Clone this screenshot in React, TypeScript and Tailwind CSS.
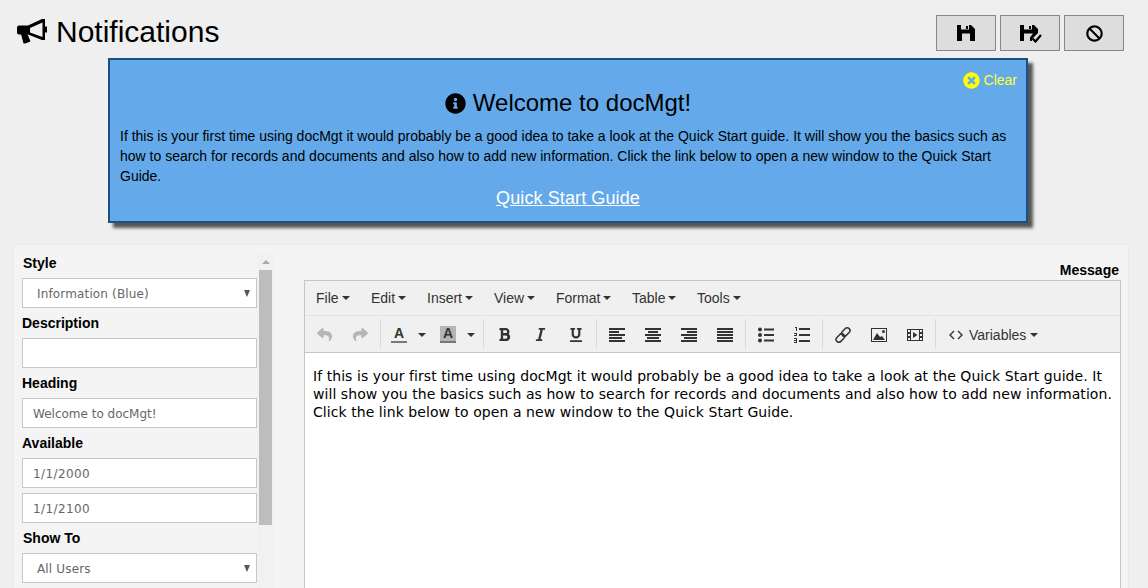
import React from "react";
import { FaInfoCircle, FaTimesCircle, FaBan, FaReply, FaShare, FaBold, FaItalic, FaUnderline } from "react-icons/fa";

const sans = "font-['Liberation_Sans',Arial,sans-serif]";
const verd = "font-['DejaVu_Sans',Verdana,sans-serif]";

const Horn = () => (
  <svg width="30" height="26" viewBox="0 0 30 26" className="mr-[9px] mt-[3px] shrink-0">
    <path
      fillRule="evenodd"
      d="M2 7.5H11L25 1H28V22H25L11 16.5H2Q0 16.5 0 14.5V9.5Q0 7.5 2 7.5ZM13 10V14.5L25.5 19V4.5Z"
      fill="#000"
    />
    <rect x="28" y="8.5" width="2" height="6" fill="#000" />
    <path d="M4 16H10.5L13.5 23.5L8 25.5H6.5Z" fill="#000" />
  </svg>
);

const Disk = ({ check = false }: { check?: boolean }) => (
  <svg width="24" height="20" viewBox="0 0 24 20">
    <path
      fillRule="evenodd"
      d={check
        ? "M2 2H16L20 6V10L14 16V18H2ZM6 2V6.5H14V2ZM11 3H13V6H11ZM6 10.5V18H12V14.5L15 10.5Z"
        : "M3 2H17L21 6V18H3ZM7 2V6.5H15V2ZM12 3H14V6H12ZM8 10.5V18H16V10.5Z"}
      fill="#000"
    />
    {check && <path d="M14.5 15.5L17.5 18.5L23 12" fill="none" stroke="#000" strokeWidth="2.2" />}
  </svg>
);

const TopButton = ({ children }: { children: React.ReactNode }) => (
  <button className="w-[60px] h-9 border border-[#888] bg-[#ddd] flex items-center justify-center">{children}</button>
);

const Field = ({ value = "", select = false, className = "", inner = "" }: { value?: string; select?: boolean; className?: string; inner?: string }) => (
  <div className={`h-[30px] w-[235px] border border-[#c8c8c8] bg-white flex items-center justify-between text-[12px] text-[#666] ${verd} ${select ? "pl-[14px] pr-[6px]" : "pl-[10px]"} ${className}`}>
    <span className={`pt-[1px] ${inner}`}>{value}</span>
    {select && <span className="w-0 h-0 border-x-[3.5px] border-x-transparent border-t-[7px] border-t-[#555]" />}
  </div>
);

const Label = ({ children, className = "" }: { children: React.ReactNode; className?: string }) => (
  <div className={`h-[30px] flex items-center text-[14px] font-bold text-black ${className}`}>{children}</div>
);

const Caret = ({ className = "" }: { className?: string }) => (
  <span className={`inline-block w-0 h-0 border-x-[4px] border-x-transparent border-t-[4px] border-t-[#333] ${className}`} />
);

const Menu = ({ label, className }: { label: string; className: string }) => (
  <div className={`flex items-center text-[14px] text-[#333] ${className}`}>
    {label}
    <Caret className="ml-[3px]" />
  </div>
);

const Tool = ({ children, className = "w-9" }: { children?: React.ReactNode; className?: string }) => (
  <div className={`h-[30px] pt-[1px] flex items-center justify-center text-[#333] ${className}`}>{children}</div>
);

const Group = ({ children, first = false, flush = false }: { children: React.ReactNode; first?: boolean; flush?: boolean }) => (
  <div className={`flex h-[30px] pr-[2px] ${first ? "" : "border-l border-[#d9d9d9]"} ${first || flush ? "" : "pl-[2px]"}`}>{children}</div>
);

const Align = ({ rows }: { rows: [number, number][] }) => (
  <svg width="16" height="16" viewBox="0 0 16 16">
    {rows.map(([x, w], i) => <rect key={i} x={x} y={1 + i * 3} width={w} height="2" fill="#333" />)}
  </svg>
);

const Bullets = () => (
  <svg width="16" height="16" viewBox="0 0 16 16" fill="#333">
    <circle cx="2" cy="2.5" r="2" /><circle cx="2" cy="8" r="2" /><circle cx="2" cy="13.5" r="2" />
    <rect x="6" y="1.5" width="10" height="2" /><rect x="6" y="7" width="10" height="2" /><rect x="6" y="12.5" width="10" height="2" />
  </svg>
);

const Numbers = () => (
  <svg width="16" height="16" viewBox="0 0 16 16" fill="#333">
    <rect x="1" y="0" width="2" height="1" /><rect x="2" y="1" width="1" height="3" />
    <rect x="0" y="6" width="3" height="1" /><rect x="0" y="8" width="3" height="1" /><rect x="2" y="7" width="1" height="1" />
    <rect x="0" y="11" width="3" height="1" /><rect x="0" y="13" width="3" height="1" /><rect x="0" y="15" width="3" height="1" /><rect x="2" y="12" width="1" height="3" />
    <rect x="5" y="1" width="11" height="2" /><rect x="5" y="7" width="11" height="2" /><rect x="5" y="13" width="11" height="2" />
  </svg>
);

const LinkIcon = () => (
  <svg width="18" height="18" viewBox="0 0 18 18" fill="none" stroke="#333" strokeWidth="1.5">
    <rect x="9" y="1.2" width="5.5" height="9.5" rx="2.7" transform="rotate(45 11.75 6)" />
    <rect x="3.5" y="7.2" width="5.5" height="9.5" rx="2.7" transform="rotate(45 6.25 12)" />
  </svg>
);

const ImageIcon = () => (
  <svg width="16" height="16" viewBox="0 0 16 16">
    <path fillRule="evenodd" d="M0 1H16V15H0ZM1 2V14H15V2Z" fill="#333" />
    <path d="M2 13L6 6L9 10L11 9L14 13Z" fill="#333" />
    <circle cx="12.5" cy="4.5" r="1.5" fill="#333" />
  </svg>
);

const Film = () => (
  <svg width="16" height="16" viewBox="0 0 16 16">
    <path fillRule="evenodd" d="M0 2H16V14H0ZM1 3V5H3V3ZM1 7V9H3V7ZM1 11V13H3V11ZM13 3V5H15V3ZM13 7V9H15V7ZM13 11V13H15V11ZM4 3V13H12V3Z" fill="#333" />
    <path d="M6 5L10.5 8L6 11Z" fill="#333" />
  </svg>
);

const Code = () => (
  <svg width="14" height="10" viewBox="0 0 14 10" fill="none" stroke="#333" strokeWidth="1.4">
    <path d="M5 1L1 5L5 9" /><path d="M9 1L13 5L9 9" />
  </svg>
);

export default function App() {
  return (
    <div className={`w-[1148px] h-[588px] overflow-hidden bg-[#efefef] text-black ${sans}`}>
      <header className="h-[58px] flex items-start pl-[17px] pr-6 pt-[15px]">
        <Horn />
        <h1 className="text-[30px] leading-[34px] flex-1">Notifications</h1>
        <div className="flex gap-1">
          <TopButton><Disk /></TopButton>
          <TopButton><Disk check /></TopButton>
          <TopButton><FaBan className="text-[17px]" /></TopButton>
        </div>
      </header>

      <section className="relative ml-[108px] w-[920px] h-[165px] border-2 border-[#1a5185] bg-[#64aaea] shadow-[5px_5px_3px_#555] px-[10px] pt-[28px]">
        <div className="absolute top-[11px] right-[9px] flex items-center text-[14px] leading-[18px] text-[#ffff33]">
          <FaTimesCircle className="text-[#ffff00] text-[17px] mr-[4px]" />
          Clear
        </div>
        <h2 className="flex items-center justify-center gap-[7px] text-[24px] leading-[30px]">
          <FaInfoCircle className="text-[21px]" />
          Welcome to docMgt!
        </h2>
        <p className="mt-[8px] text-[14px] leading-[20px]">
          If this is your first time using docMgt it would probably be a good idea to take a look at the Quick Start guide. It will show you the basics such as how to search for records and documents and also how to add new information. Click the link below to open a new window to the Quick Start Guide.
        </p>
        <div className="text-center text-[18px] leading-[24px] tracking-[0.1px] text-white underline">Quick Start Guide</div>
      </section>

      <main className="mt-[21px] ml-[13px] w-[1116px] h-[400px] border border-[#e8e8e8] rounded-[3px] bg-[#f4f4f4] flex pt-[3px] pl-[8px]">
        <div className="w-[235px] shrink-0">
          <Label className="ml-[1px]">Style</Label>
          <Field select value="Information (Blue)" inner="tracking-[0.15px]" />
          <Label>Description</Label>
          <Field />
          <Label>Heading</Label>
          <Field value="Welcome to docMgt!" />
          <Label>Available</Label>
          <Field value="1/1/2000" inner="tracking-[0.4px]" />
          <Field value="1/1/2100" className="mt-[5px]" inner="tracking-[0.4px]" />
          <Label className="ml-[1px]">Show To</Label>
          <Field select value="All Users" inner="tracking-[0.15px]" />
        </div>

        <div className="w-[17px] h-[340px] mt-[5px] bg-[#f1f1f1] px-[2px] flex flex-col items-center shrink-0">
          <div className="h-[17px] flex items-center">
            <span className="w-0 h-0 border-x-[4px] border-x-transparent border-b-[4px] border-b-[#a8a8a8]" />
          </div>
          <div className="w-[13px] h-[255px] bg-[#bdbdbd]" />
        </div>

        <div className="ml-[30px] w-[817px] shrink-0">
          <div className="h-[32px] flex items-center justify-end pr-[2px] pt-[12px] text-[14px] font-bold">Message</div>
          <div className="h-[400px] border border-[#c5c5c5] bg-white">
            <nav className="h-[35px] bg-[#f0f0f0] border-b border-[#e2e2e2] flex items-center pl-[11px]">
              <Menu label="File" className="w-[55px]" />
              <Menu label="Edit" className="w-[56px]" />
              <Menu label="Insert" className="w-[67px]" />
              <Menu label="View" className="w-[62px]" />
              <Menu label="Format" className="w-[76px]" />
              <Menu label="Table" className="w-[65px]" />
              <Menu label="Tools" className="w-[60px]" />
            </nav>
            <div className="h-[37px] bg-[#f0f0f0] border-b border-[#c5c5c5] flex items-center pl-[1px]">
              <Group first>
                <Tool><FaReply className="text-[#b5b5b5] text-[15px]" /></Tool>
                <Tool><FaShare className="text-[#b5b5b5] text-[15px]" /></Tool>
              </Group>
              <Group flush>
                <Tool>
                  <span className="w-4 flex flex-col items-center text-[14px] leading-[14px] font-bold">A<span className="block w-4 h-[2px] bg-[#777] mt-[1px]" /></span>
                </Tool>
                <Tool className="w-[10px]"><Caret /></Tool>
                <span className="w-[3px]" />
                <Tool>
                  <span className="w-4 flex flex-col items-center bg-[#b5b5b5] text-[14px] leading-[15px] font-bold">A<span className="block w-4 h-[2px] bg-[#777]" /></span>
                </Tool>
                <Tool className="w-[10px]"><Caret /></Tool>
                <span className="w-[5px]" />
              </Group>
              <Group>
                <Tool><FaBold className="text-[15px]" /></Tool>
                <Tool><FaItalic className="text-[15px]" /></Tool>
                <Tool><FaUnderline className="text-[14px]" /></Tool>
              </Group>
              <Group>
                <Tool><Align rows={[[0, 16], [0, 10], [0, 16], [0, 13], [0, 16]]} /></Tool>
                <Tool><Align rows={[[0, 16], [3, 10], [0, 16], [2, 12], [0, 16]]} /></Tool>
                <Tool><Align rows={[[0, 16], [6, 10], [0, 16], [3, 13], [0, 16]]} /></Tool>
                <Tool><Align rows={[[0, 16], [0, 16], [0, 16], [0, 16], [0, 16]]} /></Tool>
              </Group>
              <Group>
                <Tool><Bullets /></Tool>
                <Tool><Numbers /></Tool>
              </Group>
              <Group>
                <Tool><LinkIcon /></Tool>
                <Tool><ImageIcon /></Tool>
                <Tool><Film /></Tool>
              </Group>
              <div className="border-l border-[#d9d9d9] h-[30px] pt-[2px] flex items-center pl-[13px] text-[14px] text-[#333]">
                <Code />
                <span className="ml-[6px]">Variables</span>
                <Caret className="ml-[4px]" />
              </div>
            </div>
            <div className={`pl-2 pr-[1px] pt-[14px] text-[14px] leading-[18px] tracking-[0.06px] text-black ${verd}`}>
              If this is your first time using docMgt it would probably be a good idea to take a look at the Quick Start guide. It will show you the basics such as how to search for records and documents and also how to add new information. Click the link below to open a new window to the Quick Start Guide.
            </div>
          </div>
        </div>
      </main>
    </div>
  );
}
